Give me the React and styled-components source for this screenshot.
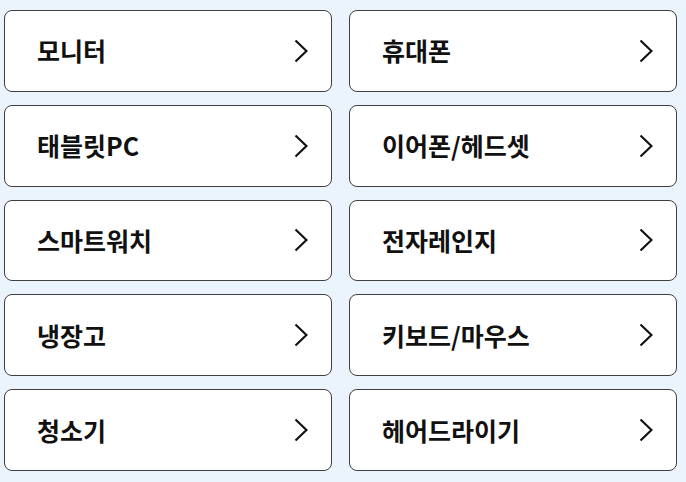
import React from 'react';
import styled, { createGlobalStyle } from 'styled-components';

const GlobalStyle = createGlobalStyle`
  html, body {
    margin: 0;
    padding: 0;
    background: #ebf3fc;
  }
  body {
    font-family: "Noto Sans CJK KR", "Noto Sans", sans-serif;
  }
`;

const categories = [
  '모니터', '휴대폰',
  '태블릿PC', '이어폰/헤드셋',
  '스마트워치', '전자레인지',
  '냉장고', '키보드/마우스',
  '청소기', '헤어드라이기',
];

const Page = styled.div`
  width: 686px;
  height: 482px;
  box-sizing: border-box;
  padding: 10px 9px 11px 4px;
  display: grid;
  grid-template-columns: 1fr 1fr;
  grid-template-rows: repeat(5, 1fr);
  column-gap: 17px;
  row-gap: 13px;
`;

const CategoryButton = styled.button`
  display: flex;
  align-items: center;
  justify-content: space-between;
  box-sizing: border-box;
  padding: 0 23px 0 32px;
  background: #ffffff;
  border: 1px solid #3f3f3f;
  border-radius: 8px;
  font-family: inherit;
  font-size: 25px;
  font-weight: 700;
  color: #111111;
  cursor: pointer;
  text-align: left;
`;

const Label = styled.span`
  line-height: 1;
`;

const Chevron = () => (
  <svg width="14" height="24" viewBox="0 0 14 24" fill="none">
    <polyline
      points="1.5,1.5 12.5,12 1.5,22.5"
      stroke="#111"
      strokeWidth="2.2"
      strokeLinecap="butt"
      strokeLinejoin="miter"
    />
  </svg>
);

export default function App() {
  return (
    <>
      <GlobalStyle />
      <Page>
        {categories.map((name) => (
          <CategoryButton key={name}>
            <Label>{name}</Label>
            <Chevron />
          </CategoryButton>
        ))}
      </Page>
    </>
  );
}
